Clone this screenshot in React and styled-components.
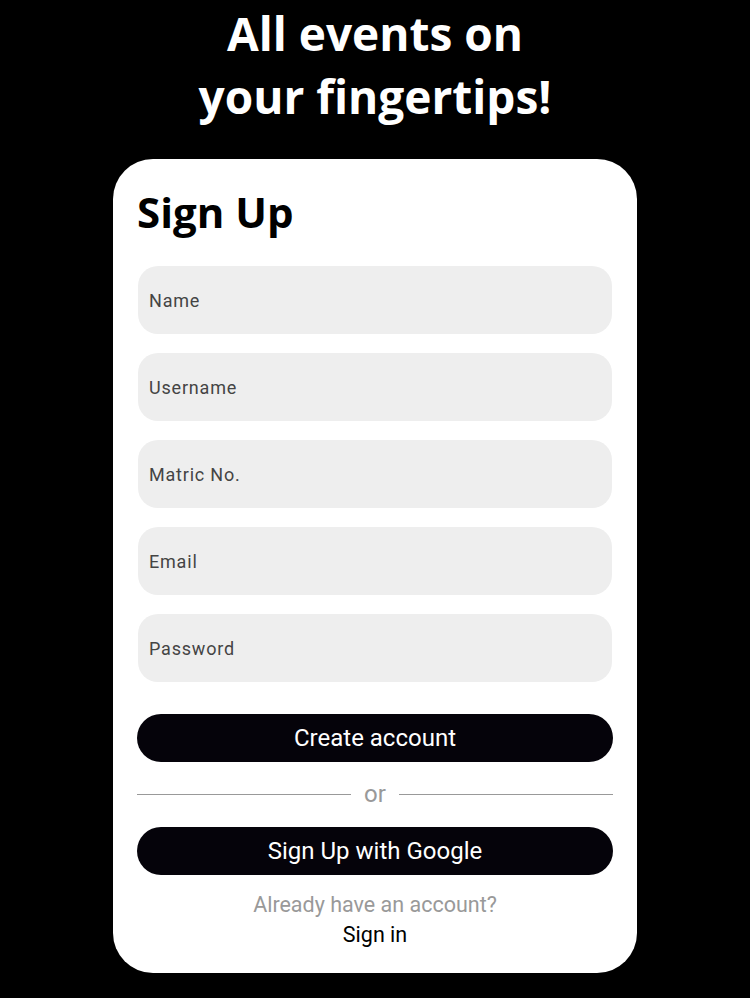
import React from 'react';
import styled, { createGlobalStyle } from 'styled-components';

const GlobalStyle = createGlobalStyle`
  html, body {
    margin: 0;
    padding: 0;
    background: #000;
  }
  body {
    font-family: Roboto, "Liberation Sans", sans-serif;
  }
`;

const Page = styled.div`
  min-height: 998px;
  display: flex;
  flex-direction: column;
  align-items: center;
  padding-top: 2px;
`;

const Headline = styled.h1`
  margin: 0;
  font-family: "Open Sans", "Noto Sans", sans-serif;
  font-weight: 700;
  font-size: 46px;
  line-height: 63px;
  color: #fff;
  text-align: center;
`;

const Card = styled.div`
  box-sizing: border-box;
  width: 524px;
  margin-top: 31px;
  padding: 24px 24px 23px;
  background: #fff;
  border-radius: 40px;
  display: flex;
  flex-direction: column;
`;

const Title = styled.h2`
  margin: 0 0 26px;
  font-family: "Open Sans", "Noto Sans", sans-serif;
  font-weight: 700;
  font-size: 42px;
  line-height: 57px;
  color: #000;
`;

const Fields = styled.div`
  display: flex;
  flex-direction: column;
  gap: 19px;
  padding: 0 1px;
`;

const Field = styled.input`
  box-sizing: border-box;
  height: 68px;
  width: 100%;
  border: none;
  outline: none;
  border-radius: 20px;
  background: #eeeeee;
  padding: 0 11px;
  font-family: Roboto, "Liberation Sans", sans-serif;
  font-size: 18px;
  letter-spacing: 0.8px;
  color: #222;

  &::placeholder {
    color: #444;
  }
`;

const PillButton = styled.button`
  box-sizing: border-box;
  width: 100%;
  height: 48px;
  margin-top: ${(p) => p.$top}px;
  border: none;
  border-radius: 24px;
  background: #05030a;
  color: #fff;
  font-family: Roboto, "Liberation Sans", sans-serif;
  font-size: 24px;
  cursor: pointer;
`;

const Divider = styled.div`
  display: flex;
  align-items: center;
  gap: 13px;
  height: 26px;
  margin-top: 19px;
  font-size: 24px;
  color: #999;

  &::before,
  &::after {
    content: "";
    flex: 1;
    height: 1px;
    background: #999;
  }
`;

const Footer = styled.div`
  margin-top: 15px;
  display: flex;
  flex-direction: column;
  align-items: center;
  font-size: 21.5px;
  line-height: 30px;
`;

const Muted = styled.span`
  color: #999;
`;

const SignInLink = styled.a`
  color: #000;
  text-decoration: none;
  cursor: pointer;
`;

const fields = ['Name', 'Username', 'Matric No.', 'Email', 'Password'];

const App = () => {
  return (
    <>
      <GlobalStyle />
      <Page>
        <Headline>
          All events on
          <br />
          your fingertips!
        </Headline>
        <Card>
          <Title>Sign Up</Title>
          <Fields>
            {fields.map((f) => (
              <Field
                key={f}
                placeholder={f}
                type={f === 'Password' ? 'password' : 'text'}
              />
            ))}
          </Fields>
          <PillButton $top={32}>Create account</PillButton>
          <Divider>or</Divider>
          <PillButton $top={20}>Sign Up with Google</PillButton>
          <Footer>
            <Muted>Already have an account?</Muted>
            <SignInLink>Sign in</SignInLink>
          </Footer>
        </Card>
      </Page>
    </>
  );
};

export default App;
